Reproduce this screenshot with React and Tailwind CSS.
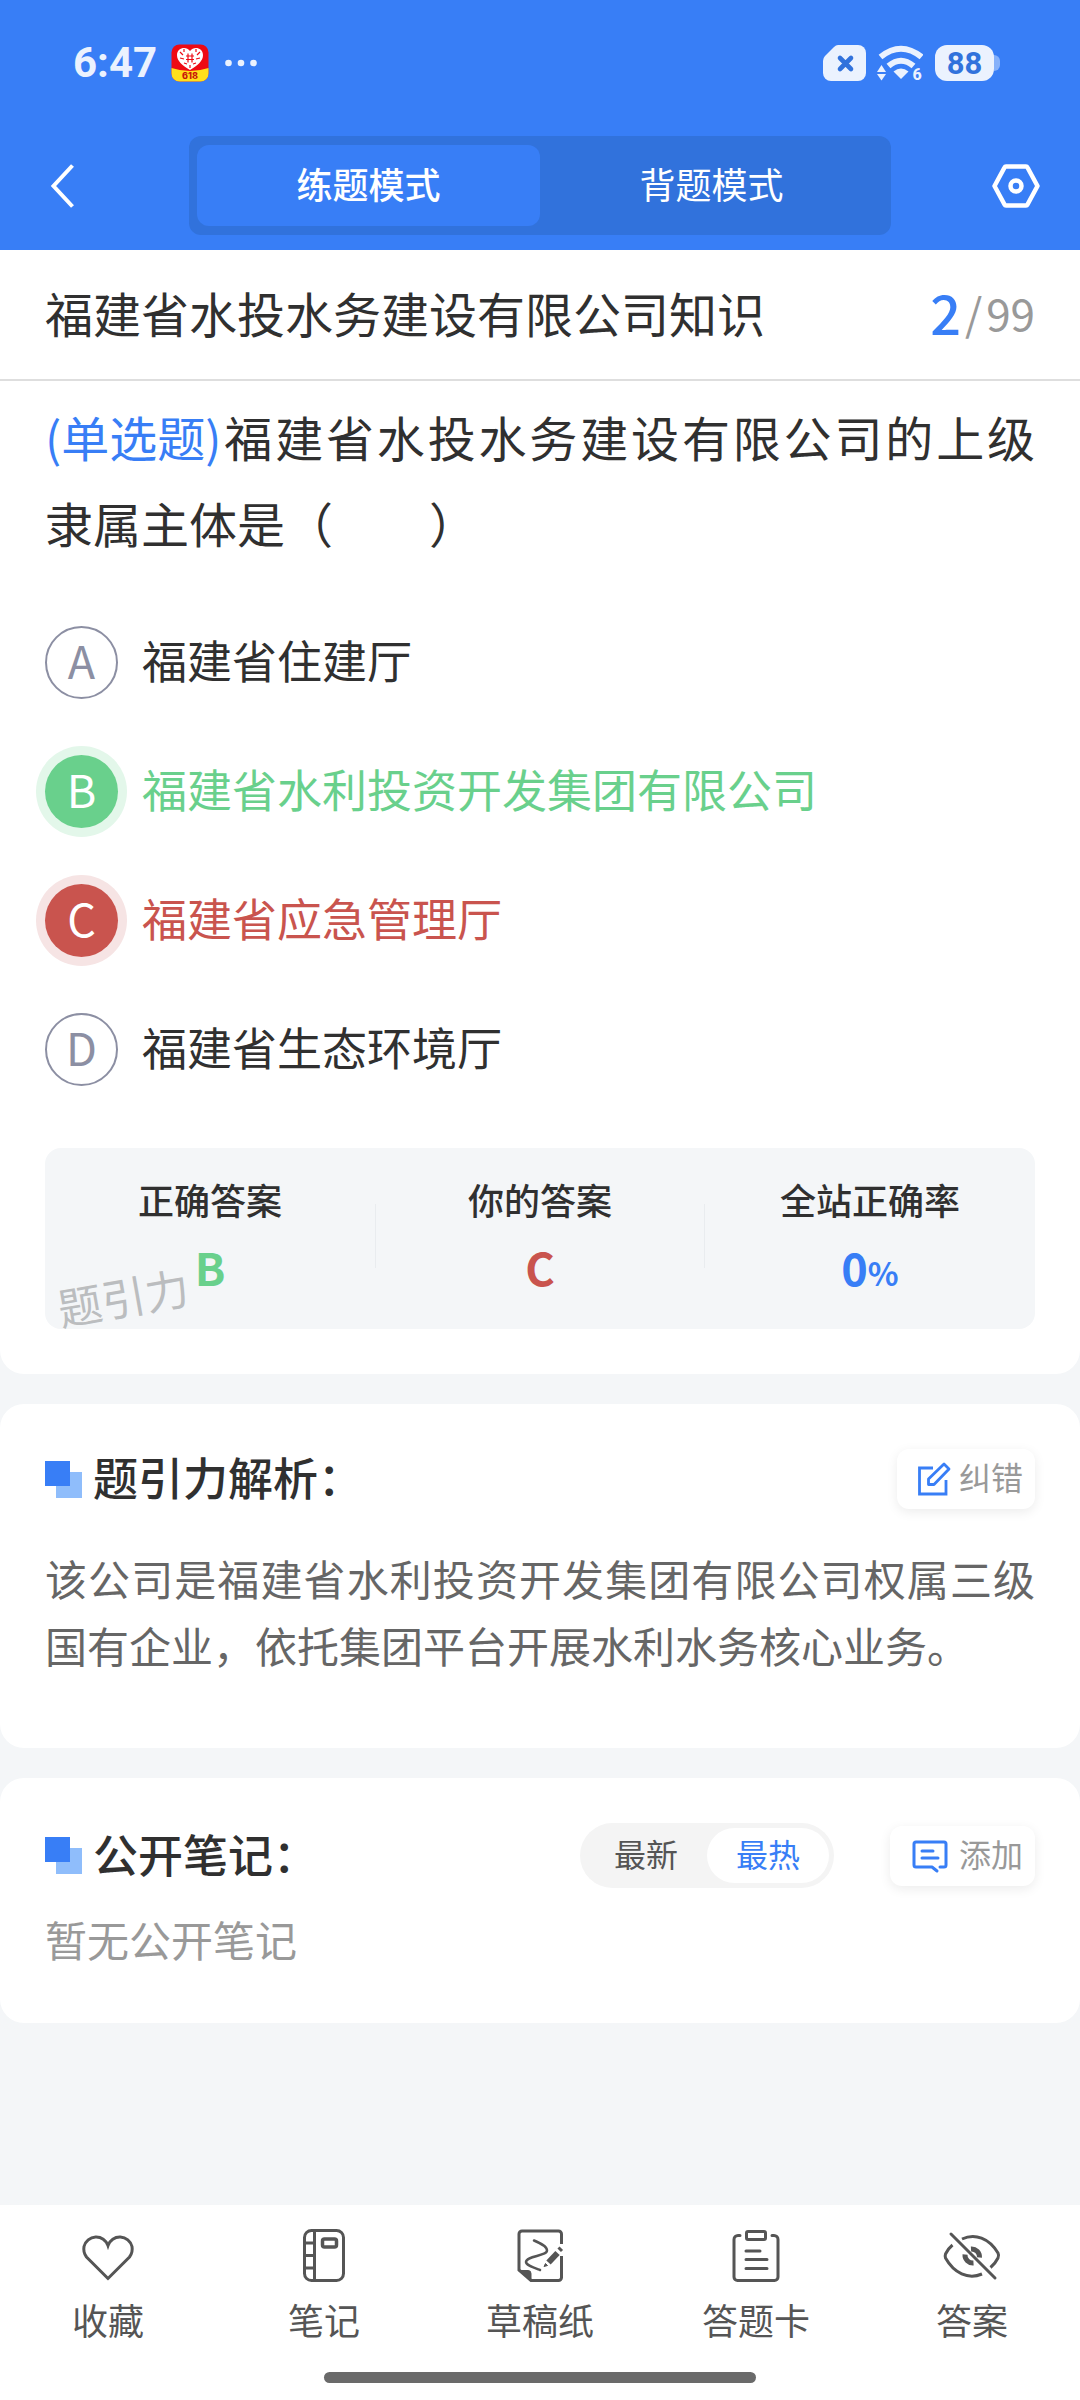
// src/App.jsx
import React, { useState } from 'react';

const options = [
  { key: 'A', text: '福建省住建厅' },
  { key: 'B', text: '福建省水利投资开发集团有限公司' },
  { key: 'C', text: '福建省应急管理厅' },
  { key: 'D', text: '福建省生态环境厅' },
];

const correct = 'B';

const StatusBar = () => (
  <div className="flex h-[126px] items-center justify-between pl-[73px] pr-20 text-[#ebf2fe]">
    <div className="flex items-center">
      <span className="font-[Roboto] text-[42px] leading-none font-bold">6:47</span>
      <svg className="ml-[14px] h-[38px] w-[38px]" viewBox="0 0 38 38">
        <rect x="0.5" y="0.5" width="37" height="37" rx="8" fill="#ee0a14" />
        <path d="M0.5 24Q19 30 37.5 24V29.5A8 8 0 0 1 29.5 37.5H8.500A8 8 0 0 1 0.5 29.500Z" fill="#ffe01b" />
        <path d="M19 26C11 21 6 17 6 11C6 4 15 1.500 19 7C23 1.500 32 4 32 11C32 17 27 21 19 26Z" fill="#fff" />
        <path
          d="M15 12h8M15 15.500h8M17 9.500v9M21 9.500v9M9 8l3 3M29 8l-3 3M9 14l4 1M29 14l-4 1M13 19l3 1M25 19l-3 1M13 5v3M25 5v3M19 21v3"
          stroke="#ee0a14"
          strokeWidth="1.200"
          fill="none"
        />
        <text x="19" y="35" textAnchor="middle" fontSize="9" fontWeight="800" fontFamily="Inter" fill="#c8140a">
          618
        </text>
      </svg>
      <svg className="ml-4 h-2 w-8" viewBox="0 0 32 8" fill="currentColor">
        <circle cx="3.500" cy="4" r="3.300" />
        <circle cx="16" cy="4" r="3.300" />
        <circle cx="28.500" cy="4" r="3.300" />
      </svg>
    </div>
    <div className="flex items-center">
      <svg className="h-9 w-[43px]" viewBox="0 0 43 36">
        <path d="M15 0H35A8 8 0 0 1 43 8V28A8 8 0 0 1 35 36H8A8 8 0 0 1 0 28V16Q0 13 2 11L11 2Q13 0 15 0Z" fill="currentColor" />
        <path d="M17 13l11 11M28 13l-11 11" stroke="#3172dc" strokeWidth="4.600" strokeLinecap="round" />
      </svg>
      <svg className="ml-[11px] h-10 w-[46px]" viewBox="0 0 46 40" fill="currentColor">
        <path d="M3.500 14Q24 -2.500 44.500 14" fill="none" stroke="currentColor" strokeWidth="6" />
        <path d="M11.500 23Q24 12.500 36.500 23" fill="none" stroke="currentColor" strokeWidth="6" />
        <path d="M16.500 28.500Q24 22.500 31.500 28.500L24 36Z" />
        <path d="M4.500 22l4.500 7H0Z" />
        <path d="M0 31h9l-4.500 6.500Z" />
        <text x="40" y="37" textAnchor="middle" fontSize="16" fontWeight="800" fontFamily="Roboto">
          6
        </text>
      </svg>
      <div className="ml-3 flex items-center">
        <span className="flex h-9 w-[59px] items-center justify-center rounded-xl bg-[#ebf2fe] font-[Roboto] text-[31px] leading-none font-bold text-[#3172dc]">
          88
        </span>
        <span className="h-4 w-[6px] rounded-r-md bg-[#86b1fa]" />
      </div>
    </div>
  </div>
);

const SectionTitle = ({ children }) => (
  <h2 className="flex items-center text-[45px] leading-[60px] font-medium text-[#303030]">
    <svg className="mr-[11px] h-[37px] w-[37px]" viewBox="0 0 37 37">
      <rect x="11" y="11" width="26" height="26" fill="#8fbdfb" />
      <rect width="25" height="25" fill="#387ef6" />
    </svg>
    <span className="pb-1">{children}</span>
  </h2>
);

const CardButton = ({ icon, children }) => (
  <button
    type="button"
    className="flex h-[60px] items-center gap-2 rounded-xl bg-white pr-3 pl-5 text-[32px] leading-none text-[#999] shadow-[0_3px_12px_rgba(0,0,0,0.08)]"
  >
    {icon}
    <span className="pb-1.5">{children}</span>
  </button>
);

const EditIcon = () => (
  <svg className="h-9 w-[34px]" viewBox="0 0 34 36" fill="none" stroke="#387ef6" strokeWidth="2.800">
    <path d="M16 7H2.500V33H29V19" />
    <path d="M27 3L32 8L17 23.500H11.500V18Z" strokeLinejoin="round" />
  </svg>
);

const NoteIcon = () => (
  <svg className="h-9 w-[41px]" viewBox="0 0 41 36" fill="none" stroke="#387ef6" strokeWidth="3" strokeLinecap="round">
    <path d="M30 29H34A2 2 0 0 0 36 27V6A2 2 0 0 0 34 4H6A2 2 0 0 0 4 6V27A2 2 0 0 0 6 29H22L27 33" strokeLinejoin="round" />
    <path d="M12 13H23M12 20H28" />
  </svg>
);

const HeartIcon = () => (
  <path d="M30 53.500L8.500 32A13.500 13.500 0 0 1 6 21.500A12.500 12.500 0 0 1 30 20.500A12.500 12.500 0 0 1 54 21.500A13.500 13.500 0 0 1 51.500 32Z" />
);

const NotebookIcon = () => (
  <>
    <rect x="10.500" y="5.500" width="39" height="50" rx="7" />
    <path d="M20.500 5.500V55.500M10.500 18H20.500M10.500 30.500H20.500M10.500 43H20.500" />
    <rect x="28.500" y="14" width="14" height="8" rx="2" strokeWidth="3.500" />
  </>
);

const SketchIcon = () => (
  <>
    <path d="M51.500 19V9A3 3 0 0 0 48.500 6H12A3 3 0 0 0 9 9V45L21 55.500H48.500A3 3 0 0 0 51.500 52.500V31" />
    <path d="M9 45.500H18A3 3 0 0 1 21 48.500V55.500Z" fill="currentColor" strokeWidth="1" />
    <path d="M24 15.500C30 18 37 21 37 25.500C37 31 16 31 16 37C16 40 22 42 30 45" strokeLinecap="round" strokeWidth="2.500" />
    <path d="M38.500 37.500L47.500 28" strokeWidth="6" />
    <path d="M48.500 22.500L52 26" strokeWidth="3" />
    <path d="M34 41.500L35.500 38.500L37.500 40.500Z" fill="currentColor" strokeWidth="1" />
  </>
);

const ClipboardIcon = () => (
  <>
    <path
      d="M14 10.500H12A4 4 0 0 0 8 14.500V52A3.500 3.500 0 0 0 11.500 55.500H48.500A3.500 3.500 0 0 0 52 52V14.500A4 4 0 0 0 48 10.500H46"
      strokeLinecap="round"
    />
    <rect x="20.500" y="6.500" width="19" height="8" rx="1.500" />
    <path d="M20 26H34M20 34.500H41M20 43.500H41" strokeLinecap="round" />
  </>
);

const EyeOffIcon = () => (
  <>
    <path d="M20 14C33 8 47 13 56 28C57 30 57 31 56 33C54 37 51.500 40 48.500 42.500M10.500 20C8 22 5.500 25 3.500 29C3 30.500 3 31 3.500 33C12 48 26 55 40 49" />
    <path d="M9 9L53 53" strokeLinecap="round" />
    <path d="M29 24A8 8 0 0 1 37.500 32.500M23 29.500A8 8 0 0 0 31.500 38" strokeWidth="5" />
  </>
);

const tabs = [
  { label: '收藏', Icon: HeartIcon },
  { label: '笔记', Icon: NotebookIcon },
  { label: '草稿纸', Icon: SketchIcon },
  { label: '答题卡', Icon: ClipboardIcon },
  { label: '答案', Icon: EyeOffIcon },
];

const badgeClass = (key, picked) => {
  if (key === correct) return 'bg-[#69d08c] text-white ring-[9px] ring-[#e3f7ea]';
  if (key === picked) return 'bg-[#c9544e] text-white ring-[9px] ring-[#f6e4e4]';
  return 'border-2 border-[#8c8fa3] text-[#8c8fa3]';
};

const textClass = (key, picked) => {
  if (key === correct) return 'text-[#69d08c]';
  if (key === picked) return 'text-[#c9544e]';
  return 'text-[#303030]';
};

const App = () => {
  const [picked, setPicked] = useState('C');

  return (
    <div className="flex min-h-screen flex-col bg-[#f4f6f8] font-['Noto_Sans_CJK_SC',sans-serif]">
      <header className="bg-[#387ef6] text-white">
        <StatusBar />
        <div className="flex h-[124px] items-start px-10 pt-[10px]">
          <button type="button" aria-label="返回" className="flex h-[99px] w-12 items-center justify-center">
            <svg className="h-11 w-7" viewBox="0 0 28 44" fill="none" stroke="currentColor" strokeWidth="4">
              <path d="M22.500 1.500L3.500 22L22.500 42.500" />
            </svg>
          </button>
          <div className="mx-[101px] flex h-[99px] flex-1 rounded-xl bg-[#3172dc] px-2 py-[9px] text-[36px] leading-none">
            <button type="button" className="flex-1 rounded-xl bg-[#387ef6] pb-1.5 font-medium">
              练题模式
            </button>
            <button type="button" className="flex-1 pb-1.5">
              背题模式
            </button>
          </div>
          <button type="button" aria-label="设置" className="flex h-[99px] items-center">
            <svg className="h-12 w-12" viewBox="0 0 48 48" fill="none" stroke="currentColor" strokeWidth="4.500" strokeLinejoin="round">
              <path d="M14 4.500H34Q35 4.500 35.500 5.500L45.500 24L35.500 42.500Q35 43.500 34 43.500H14Q13 43.500 12.500 42.500L2.500 24L12.500 5.500Q13 4.500 14 4.500Z" />
              <circle cx="24" cy="24" r="5.500" />
            </svg>
          </button>
        </div>
      </header>

      <main className="flex flex-col gap-[30px]">
        <section className="rounded-b-3xl bg-white pb-[45px]">
          <div className="flex h-[131px] items-center justify-between border-b-2 border-[#dedede] px-[45px] pb-1.5">
            <h1 className="text-[48px] leading-none text-[#303030]">福建省水投水务建设有限公司知识</h1>
            <p className="flex items-center gap-1 leading-none text-[#999]">
              <span className="text-[54px] font-medium text-[#387ef6]">2</span>
              <span className="text-[44px]">/</span>
              <span className="text-[44px]">99</span>
            </p>
          </div>

          <div className="px-[45px] pt-3">
            <p className="text-justify text-[48px] leading-[86px] text-[#303030]">
              <span className="inline-block text-[#387ef6]">(单选题)</span>
              福建省水投水务建设有限公司的上级隶属主体是（　　）
            </p>

            <div className="mt-[33px]">
              {options.map(({ key, text }) => (
                <label key={key} className="flex h-[129px] items-center gap-6">
                  <input
                    type="radio"
                    name="answer"
                    value={key}
                    checked={picked === key}
                    onChange={() => setPicked(key)}
                    className="sr-only"
                  />
                  <span className={`flex h-[73px] w-[73px] items-center justify-center rounded-full pb-1.5 text-[45px] leading-none ${badgeClass(key, picked)}`}>
                    {key}
                  </span>
                  <span className={`pb-1.5 text-[45px] leading-none ${textClass(key, picked)}`}>{text}</span>
                </label>
              ))}
            </div>

            <div className="relative mt-[34px] grid h-[181px] grid-cols-3 items-center rounded-2xl bg-[#f4f6f8] pb-1.5 text-center font-medium">
              <div>
                <p className="text-[36px] leading-[54px] text-[#303030]">正确答案</p>
                <p className="mt-2 text-[45px] leading-[66px] font-bold text-[#69d08c]">{correct}</p>
              </div>
              <div className="relative">
                <p className="text-[36px] leading-[54px] text-[#303030]">你的答案</p>
                <p className="mt-2 text-[45px] leading-[66px] font-bold text-[#c9544e]">{picked}</p>
                <span className="absolute inset-y-8 left-0 w-px bg-[#e9ecef]" />
                <span className="absolute inset-y-8 right-0 w-px bg-[#e9ecef]" />
              </div>
              <div>
                <p className="text-[36px] leading-[54px] text-[#303030]">全站正确率</p>
                <p className="mt-2 text-[45px] leading-[66px] font-bold text-[#387ef6]">
                  0<span className="text-[32px] leading-none">%</span>
                </p>
              </div>
              <span className="absolute bottom-2 left-3 -rotate-10 text-[44px] leading-[50px] font-normal text-[#bbbdbf]">题引力</span>
            </div>
          </div>
        </section>

        <section className="rounded-3xl bg-white px-[45px] pt-[43px] pb-[70px]">
          <div className="flex items-center justify-between">
            <SectionTitle>题引力解析：</SectionTitle>
            <CardButton icon={<EditIcon />}>纠错</CardButton>
          </div>
          <p className="mt-[33px] text-justify text-[42px] leading-[67px] text-[#666]">
            该公司是福建省水利投资开发集团有限公司权属三级国有企业，依托集团平台开展水利水务核心业务。
          </p>
        </section>

        <section className="rounded-3xl bg-white px-[45px] pt-[45px] pb-[52px]">
          <div className="flex items-center">
            <SectionTitle>公开笔记：</SectionTitle>
            <div className="mr-14 ml-auto flex h-[65px] rounded-full bg-[#f4f4f4] p-[5px] text-[32px] leading-none">
              <button type="button" className="w-[122px] rounded-full pb-1.5 text-[#555]">
                最新
              </button>
              <button type="button" className="w-[122px] rounded-full bg-white pb-1.5 text-[#387ef6]">
                最热
              </button>
            </div>
            <CardButton icon={<NoteIcon />}>添加</CardButton>
          </div>
          <p className="mt-[19px] text-[42px] leading-[64px] text-[#999]">暂无公开笔记</p>
        </section>
      </main>

      <nav className="mt-auto bg-white pt-5 pb-[17px]">
        <div className="grid grid-cols-5">
          {tabs.map(({ label, Icon }) => (
            <button key={label} type="button" className="flex flex-col items-center gap-[7px] text-[36px] leading-[54px] text-[#555]">
              <svg className="h-[60px] w-[60px]" viewBox="0 0 60 60" fill="none" stroke="currentColor" strokeWidth="3">
                <Icon />
              </svg>
              {label}
            </button>
          ))}
        </div>
        <div className="mx-auto mt-[26px] h-[11px] w-2/5 rounded-full bg-[#6a6a6a]" />
      </nav>
    </div>
  );
};

export default App;
